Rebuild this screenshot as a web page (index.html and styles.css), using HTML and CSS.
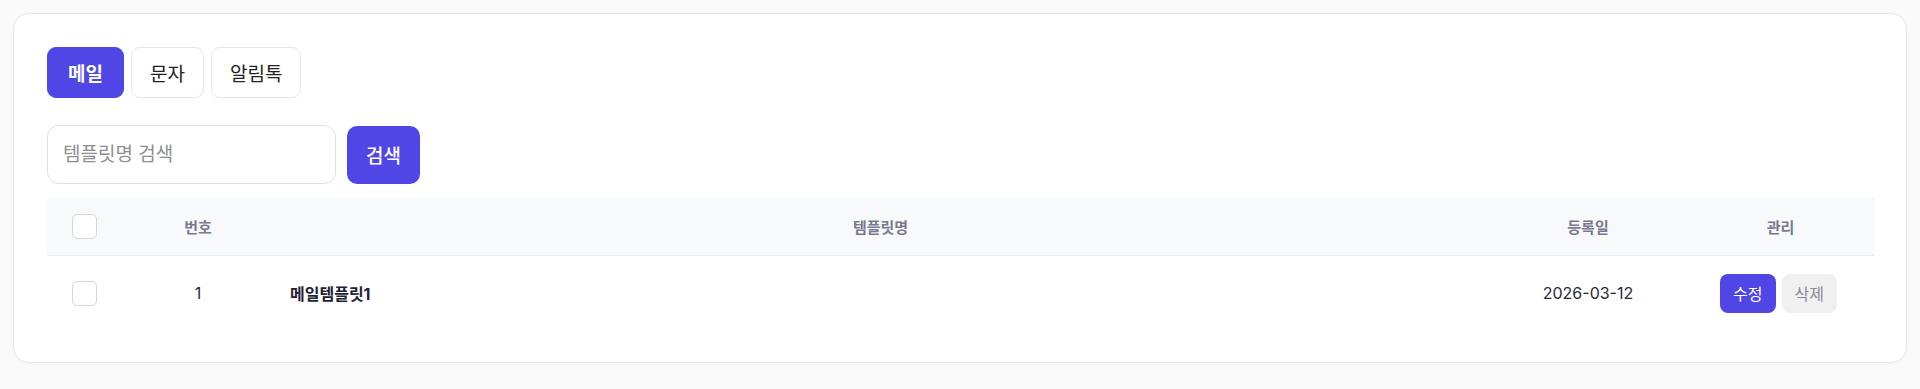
FILE: index.html
```html
<!DOCTYPE html>
<html>
<head>
    <title>템플릿 관리</title>
    <meta charset="UTF-8">
    <link rel="stylesheet" href="styles.css">
</head>
<body>
    <div class="card">
        <div class="tabs">
            <button class="tab active">메일</button>
            <button class="tab">문자</button>
            <button class="tab">알림톡</button>
        </div>

        <div class="search">
            <input type="text" class="search-input" placeholder="템플릿명 검색">
            <button class="search-btn">검색</button>
        </div>

        <table class="list">
            <colgroup>
                <col style="width:77px">
                <col style="width:148px">
                <col>
                <col style="width:198px">
                <col style="width:187px">
            </colgroup>
            <thead>
                <tr>
                    <th><span class="check"></span></th>
                    <th>번호</th>
                    <th>템플릿명</th>
                    <th>등록일</th>
                    <th>관리</th>
                </tr>
            </thead>
            <tbody>
                <tr>
                    <td class="center"><span class="check"></span></td>
                    <td class="center">1</td>
                    <td class="name">메일템플릿1</td>
                    <td class="center">2026-03-12</td>
                    <td class="center">
                        <div class="actions">
                            <button class="btn-edit">수정</button>
                            <button class="btn-delete">삭제</button>
                        </div>
                    </td>
                </tr>
            </tbody>
        </table>
    </div>
</body>
</html>
```

FILE: styles.css
```css
/* Page */
body {
    font-family: Inter, "Noto Sans CJK KR", sans-serif;
    margin: 0;
    padding: 13px;
    background: #fafafa;
    color: #262a3b;
}

.card {
    background: white;
    border: 1px solid #e5e7eb;
    border-radius: 16px;
    padding: 33px 32px 32px 33px;
    box-shadow: 0 1px 3px rgba(0,0,0,0.03);
}

/* Tabs */
.tabs {
    display: flex;
    gap: 7px;
}

.tab {
    height: 51px;
    padding: 0 18px;
    border: 1px solid #e3e5ea;
    border-radius: 9px;
    background: white;
    color: #222;
    font-family: inherit;
    font-size: 19px;
    cursor: pointer;
}

.tab.active {
    padding: 0 20px;
    background: #4f46e5;
    border-color: #4f46e5;
    color: white;
    font-weight: 600;
}

/* Search */
.search {
    display: flex;
    gap: 11px;
    margin-top: 27px;
    align-items: center;
}

.search-input {
    width: 289px;
    height: 59px;
    box-sizing: border-box;
    padding: 0 15px;
    border: 1px solid #dfe1e8;
    border-radius: 12px;
    font-family: inherit;
    font-size: 19px;
    color: #222;
}

.search-input::placeholder {
    color: #8e8e96;
}

.search-btn {
    width: 73px;
    height: 58px;
    border: none;
    border-radius: 10px;
    background: #4f46e5;
    color: white;
    font-family: inherit;
    font-size: 19px;
    font-weight: 500;
    cursor: pointer;
}

/* Table */
.list {
    width: 100%;
    margin-top: 14px;
    border-collapse: collapse;
    table-layout: fixed;
}

.list th {
    height: 57px;
    padding: 0;
    background: #f8f9fb;
    border-bottom: 1px solid #e8eaef;
    color: #777a8e;
    font-size: 15px;
    font-weight: 600;
    text-align: center;
    vertical-align: middle;
}

.list td {
    height: 74px;
    padding: 0;
    font-size: 16px;
    vertical-align: middle;
}

.list td.center {
    text-align: center;
}

.list td.name {
    padding-left: 18px;
    font-weight: 700;
    color: #1f2233;
}

.check {
    display: inline-block;
    width: 23px;
    height: 23px;
    border: 1px solid #d4d6dc;
    border-radius: 5px;
    background: white;
    vertical-align: middle;
    margin-right: 2px;
}

.actions {
    display: inline-flex;
    gap: 6px;
    margin-right: 4px;
}

.btn-edit,
.btn-delete {
    height: 39px;
    padding: 0 13px;
    border: none;
    border-radius: 8px;
    font-family: inherit;
    font-size: 16px;
    cursor: pointer;
}

.btn-edit {
    background: #4f46e5;
    color: white;
}

.btn-delete {
    background: #f0f0f1;
    color: #8a8a90;
}
```
